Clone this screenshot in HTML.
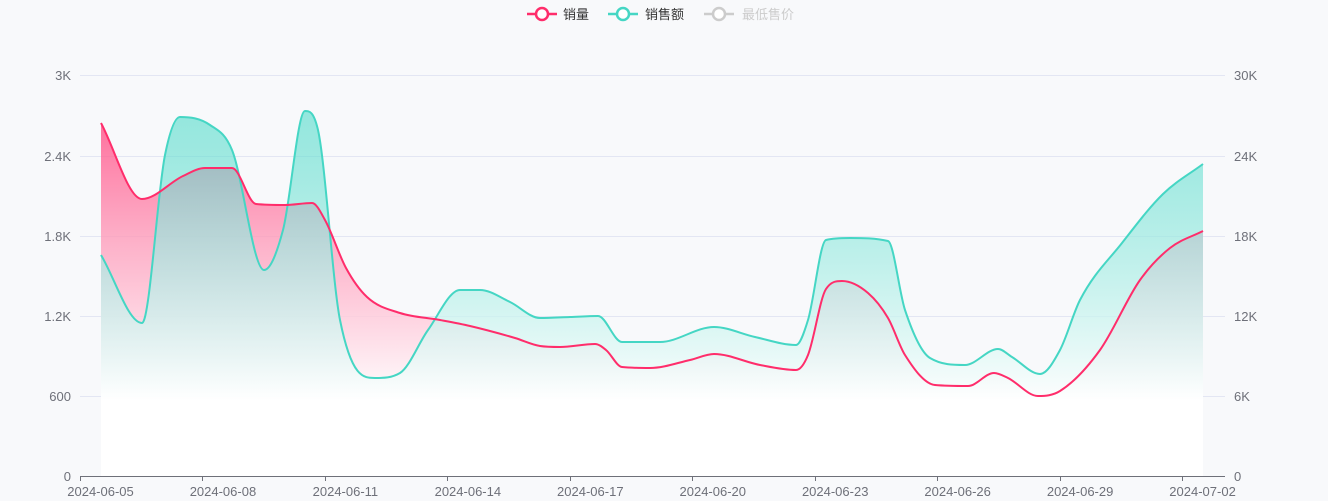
<!DOCTYPE html>
<html><head><meta charset="utf-8"><style>
html,body{margin:0;padding:0;background:#f8f9fb;width:1328px;height:501px;overflow:hidden}
svg{display:block}
text{font-family:"Liberation Sans","Noto Sans CJK SC",sans-serif}
</style></head><body>
<svg id="s" width="1328" height="501" xmlns="http://www.w3.org/2000/svg">
<defs>
<linearGradient id="gp" gradientUnits="userSpaceOnUse" x1="0" y1="120" x2="0" y2="400">
<stop offset="0" stop-color="#ff4f86" stop-opacity="0.95"/><stop offset="0.45" stop-color="#ff9dbb" stop-opacity="0.9"/><stop offset="1" stop-color="#ffffff" stop-opacity="1"/></linearGradient>
<linearGradient id="gt" gradientUnits="userSpaceOnUse" x1="0" y1="110" x2="0" y2="400">
<stop offset="0" stop-color="#45d8c6" stop-opacity="0.7"/><stop offset="1" stop-color="#ffffff" stop-opacity="1"/></linearGradient>
</defs>
<g stroke="#e3e6f3" stroke-width="1">
<line x1="80" x2="1225" y1="75.5" y2="75.5"/><line x1="80" x2="1225" y1="156.5" y2="156.5"/>
<line x1="80" x2="1225" y1="236.5" y2="236.5"/><line x1="80" x2="1225" y1="316.5" y2="316.5"/>
<line x1="80" x2="1225" y1="396.5" y2="396.5"/></g>
<g id="areas"></g>
<g font-size="13" fill="#6e7079" text-anchor="end">
<text x="71" y="80">3K</text><text x="71" y="161">2.4K</text><text x="71" y="241">1.8K</text>
<text x="71" y="321">1.2K</text><text x="71" y="401">600</text><text x="71" y="481">0</text></g>
<g font-size="13" fill="#6e7079" text-anchor="start">
<text x="1234" y="80">30K</text><text x="1234" y="161">24K</text><text x="1234" y="241">18K</text>
<text x="1234" y="321">12K</text><text x="1234" y="401">6K</text><text x="1234" y="481">0</text></g>
<line x1="80" x2="1225" y1="476.5" y2="476.5" stroke="#6e7079"/>
<g id="ticks" stroke="#6e7079"></g>
<g id="xl" font-size="13" fill="#6e7079" text-anchor="middle"></g>
<g font-size="13">
<line x1="527" x2="557" y1="14" y2="14" stroke="#ff2d6b" stroke-width="2.5"/><circle cx="542" cy="14" r="6" fill="#fff" stroke="#ff2d6b" stroke-width="2.5"/>
<text x="563" y="19" fill="#333">销量</text>
<line x1="608" x2="638" y1="14" y2="14" stroke="#45d6c4" stroke-width="2.5"/><circle cx="623" cy="14" r="6" fill="#fff" stroke="#45d6c4" stroke-width="2.5"/>
<text x="645" y="19" fill="#333">销售额</text>
<line x1="704" x2="734" y1="14" y2="14" stroke="#ccc" stroke-width="2.5"/><circle cx="719" cy="14" r="6" fill="#fff" stroke="#ccc" stroke-width="2.5"/>
<text x="742" y="19" fill="#ccc">最低售价</text></g>
</svg>
<script>
// [x,y] points
var P=[[101,123],[142,199],[183,176],[205,168],[232,168],[256,204],[285,205],[312,203],[325,220],[346,268],[367,297],[400,313],[440,320],[470,326],[515,338],[540,346],[560,347],[595,344],[606,350],[622,367],[650,368],[690,360],[714,354],[760,365],[796,370],[808,355],[826,289],[842,281],[868,293],[888,318],[905,355],[935,385],[968,386],[994,373],[1008,378],[1038,396],[1060,391],[1100,350],[1140,280],[1170,248],[1203,231]];
var T=[[101,255],[142,323],[165,155],[180,117],[210,125],[232,150],[264,270],[283,230],[305,111],[318,130],[340,320],[375,378],[400,373],[428,330],[460,290],[480,290],[510,302],[540,318],[570,317],[598,316],[622,342],[660,342],[714,327],[755,337],[796,345],[808,320],[826,240],[850,238],[888,241],[905,310],[930,358],[965,365],[998,349],[1012,357],[1040,374],[1060,350],[1080,300],[1122,243],[1163,194],[1203,164]];
function mono(a){var n=a.length,m=[],d=[];for(var i=0;i<n-1;i++)d.push((a[i+1][1]-a[i][1])/(a[i+1][0]-a[i][0]));
m[0]=d[0];m[n-1]=d[n-2];for(i=1;i<n-1;i++){m[i]=(d[i-1]*d[i]<=0)?0:(d[i-1]+d[i])/2;}
for(i=0;i<n-1;i++){if(d[i]==0){m[i]=m[i+1]=0;continue;}var al=m[i]/d[i],be=m[i+1]/d[i],s=al*al+be*be;if(s>9){var tt=3/Math.sqrt(s);m[i]=tt*al*d[i];m[i+1]=tt*be*d[i];}}
var s="M"+a[0][0]+","+a[0][1];for(i=0;i<n-1;i++){var h=(a[i+1][0]-a[i][0])/3;s+=" C"+(a[i][0]+h)+","+(a[i][1]+m[i]*h)+" "+(a[i+1][0]-h)+","+(a[i+1][1]-m[i+1]*h)+" "+a[i+1][0]+","+a[i+1][1];}return s}
var g=document.getElementById("areas"),NS="http://www.w3.org/2000/svg";
function el(n,a){var e=document.createElementNS(NS,n);for(var k in a)e.setAttribute(k,a[k]);return e}
var pt=mono(T),pp=mono(P),end=" L1203,476 L101,476 Z";
g.appendChild(el("path",{d:pp+end,fill:"url(#gp)","fill-opacity":"0.85"}));
g.appendChild(el("path",{d:pt+end,fill:"url(#gt)","fill-opacity":"0.8"}));
g.appendChild(el("path",{d:pt,fill:"none",stroke:"#45d6c4","stroke-width":2}));
g.appendChild(el("path",{d:pp,fill:"none",stroke:"#ff2d6b","stroke-width":2}));
var labs=["2024-06-05","2024-06-08","2024-06-11","2024-06-14","2024-06-17","2024-06-20","2024-06-23","2024-06-26","2024-06-29","2024-07-02"];
var tk=document.getElementById("ticks"),xl=document.getElementById("xl");
for(var i=0;i<10;i++){var x=Math.round(80+122.45*i)+0.5;tk.appendChild(el("line",{x1:x,x2:x,y1:476,y2:481}));
var tx=el("text",{x:100.5+122.45*i,y:496});tx.textContent=labs[i];xl.appendChild(tx);}
</script>
</body></html>
